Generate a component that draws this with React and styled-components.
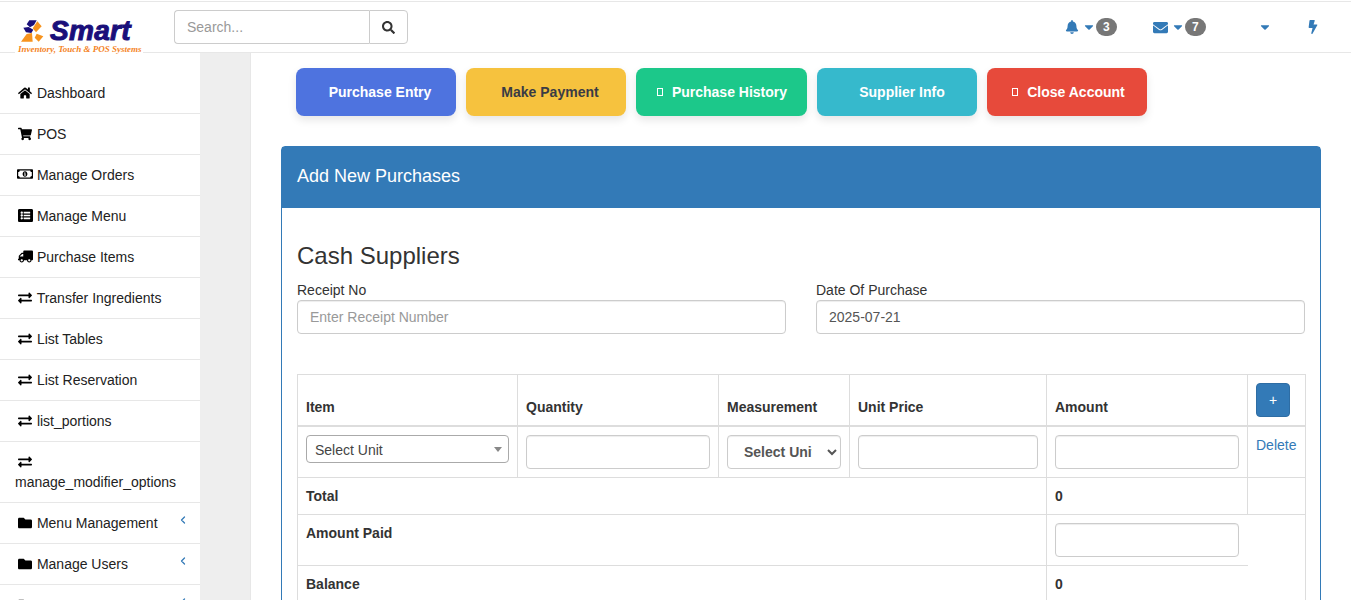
import React from 'react';
import styled, { createGlobalStyle } from 'styled-components';
import {
  FaHome, FaShoppingCart, FaRegMoneyBillAlt, FaListAlt, FaTruck, FaExchangeAlt,
  FaFolder, FaSearch, FaBell, FaEnvelope, FaCaretDown, FaBolt,
} from 'react-icons/fa';
import { ChevronLeft } from 'lucide-react';

const Global = createGlobalStyle`
  * { box-sizing: border-box; }
  html, body { margin: 0; height: 600px; overflow: hidden; background: #fff; }
  body { font-family: "Liberation Sans", Arial, sans-serif; font-size: 14px; line-height: 20px; color: #333; }
`;

const Page = styled.div`display: flex; flex-direction: column; height: 600px; overflow: hidden; padding-top: 1px;`;

const Header = styled.header`
  display: flex; align-items: flex-start; height: 52px; flex: none;
  border-top: 1px solid #e7e7e7; border-bottom: 1px solid #e7e7e7; background: #fff;
  position: relative; z-index: 2;
`;
const Logo = styled.div`
  width: 128px; height: 38px; margin: 13px 0 0 15px; background: #fff; flex: none;
  display: flex; flex-direction: column; align-items: flex-start;
`;
const LogoTop = styled.div`display: flex; align-items: center; height: 31px; padding-left: 5px;`;
const LogoName = styled.span`
  font-family: "Liberation Sans", sans-serif; font-weight: 700; font-style: italic; font-size: 28px; line-height: 31px;
  color: #1a0f7a; margin-left: 5px; letter-spacing: .3px; -webkit-text-stroke: 1px #1a0f7a;
`;
const LogoTag = styled.span`
  font-family: "Liberation Serif", serif; font-weight: 700; font-style: italic; font-size: 9px; line-height: 7px;
  color: #f5841f; padding-left: 3px; white-space: nowrap;
`;
const Search = styled.form`display: flex; width: 234px; height: 34px; margin: 8px 0 0 31px; flex: none;`;
const SearchInput = styled.input`
  flex: 1; min-width: 0; height: 34px; padding: 6px 12px; font: 14px "Liberation Sans", sans-serif; color: #555;
  border: 1px solid #ccc; border-right: 0; border-radius: 4px 0 0 4px; outline: 0;
  &::placeholder { color: #999; opacity: 1; }
`;
const SearchButton = styled.button`
  width: 39px; height: 34px; background: #fff; color: #333; border: 1px solid #ccc; border-radius: 0 4px 4px 0;
  display: flex; align-items: center; justify-content: center; padding: 0; font-size: 13px;
`;
const TopNav = styled.nav`display: flex; align-items: center; height: 50px; margin-left: auto; color: #337ab7;`;
const TopItem = styled.a`
  display: flex; align-items: center; width: ${p => p.$w}px; color: #337ab7; font-size: 14px;
`;
const Badge = styled.span`
  display: inline-block; min-width: 20px; height: 18px; padding: 3px 7px; border-radius: 10px; background: #777; color: #fff;
  font-size: 12px; font-weight: 700; line-height: 12px; text-align: center;
`;
const Caret = styled(FaCaretDown)`font-size: 14px; margin-left: 3px;`;

const Body = styled.div`display: flex; flex: 1; min-height: 0;`;
const Sidebar = styled.ul`
  width: 200px; flex: none; margin: 0; padding: 20px 0 0; list-style: none; background: #fff; overflow: hidden;
`;
const SideItem = styled.li`
  position: relative; padding: 10px 15px; border-bottom: 1px solid #e7e7e7; color: #222; font-size: 14px; line-height: 20px;
`;
const SideIcon = styled.span`
  display: inline-flex; align-items: center; justify-content: center; width: 16px; height: 14px; margin: 0 0 0 2px;
  vertical-align: -2px; font-size: ${p => p.$size || 14}px; color: #000;
  svg { transform: ${p => (p.$flip ? 'scaleX(-1)' : 'none')}; }
`;
const Chevron = styled(ChevronLeft)`
  position: absolute; right: 11px; top: 11px; color: #337ab7;
`;
const Gutter = styled.div`width: 51px; flex: none; background: #eee; border-right: 1px solid #e7e7e7;`;
const Main = styled.main`flex: 1; min-width: 0; padding: 15px 30px 0;`;

const ActionRow = styled.div`display: flex; gap: 10px; margin-left: 15px;`;
const Action = styled.button`
  height: 48px; width: ${p => p.$w}px; border: 0; border-radius: 8px; background: ${p => p.$bg}; color: ${p => p.$fg || '#fff'};
  font: 700 14px "Liberation Sans", sans-serif; box-shadow: 0 4px 8px rgba(0,0,0,.1); padding: 0 0 0 ${p => p.$pad || 0}px;
  display: flex; align-items: center; justify-content: center; gap: 9px;
`;
const Tofu = styled.span`display: inline-block; width: 6px; height: 8px; border: 1px solid currentColor;`;

const Panel = styled.section`margin-top: 30px; border: 1px solid #337ab7; border-radius: 4px; height: 500px;`;
const PanelHead = styled.div`
  height: 61px; padding: 0 15px; background: #337ab7; color: #fff; font-size: 18px; line-height: 58px;
`;
const PanelBody = styled.div`padding: 15px;`;
const Title = styled.h3`margin: 20px 0 10px; font-size: 24px; line-height: 26px; font-weight: 500; color: #333;`;
const FormRow = styled.div`display: grid; grid-template-columns: 489px 489px; column-gap: 30px;`;
const Label = styled.label`display: block; font-size: 14px; line-height: 20px; height: 21px; padding-top: 1px;`;
const Field = styled.input`
  display: block; width: 100%; height: 34px; padding: 6px 12px; font: 14px "Liberation Sans", sans-serif; color: #555;
  border: 1px solid #ccc; border-radius: 4px; box-shadow: inset 0 1px 1px rgba(0,0,0,.075); outline: 0; background: #fff;
  &::placeholder { color: #999; opacity: 1; }
`;
const PaidField = styled(Field)`width: 184px;`;

const Table = styled.table`
  width: 1008px; margin-top: 40px; table-layout: fixed; border-collapse: collapse; border: 1px solid #ddd; color: #333;
`;
const Th = styled.th`
  border: 1px solid #ddd; border-bottom: 2px solid #ddd; padding: 8px; text-align: left; vertical-align: bottom;
  font-size: 14px; line-height: 20px; font-weight: 700;
`;
const Td = styled.td`
  border: 1px solid #ddd; padding: 8px; vertical-align: top; font-size: 14px; line-height: 20px;
  font-weight: ${p => (p.$bold ? 700 : 400)};
  ${p => (p.$open ? 'border-right: 0;' : '')}
`;
const Select2 = styled.div`
  position: relative; height: 28px; border: 1px solid #aaa; border-radius: 4px; padding: 0 8px; line-height: 28px; color: #444; background: #fff;
  &::after {
    content: ''; position: absolute; right: 6px; top: 11px; border: 4px solid transparent; border-top: 5px solid #888; border-bottom: 0;
  }
`;
const NativeSelect = styled.select`
  display: block; width: 114px; height: 34px; padding: 6px 12px; background: #fff; color: #555; border: 1px solid #ccc; border-radius: 4px;
  font: 700 14px "Liberation Sans", sans-serif; text-align: center; outline: 0; box-shadow: inset 0 1px 1px rgba(0,0,0,.075);
`;
const AddButton = styled.button`
  display: block; width: 34px; height: 34px; padding: 0; background: #337ab7; color: #fff; border: 1px solid #2e6da4; border-radius: 4px;
  font: 14px "Liberation Sans", sans-serif;
`;
const DeleteLink = styled.a`color: #337ab7; font-size: 14px;`;

const LogoMark = () => (
  <svg width="25" height="24" viewBox="32 20 75 72" aria-hidden="true">
    <polygon points="52,36 60,24 82,24 74,38 62,45" fill="#1a0f7a" />
    <polygon points="42,46 58,44 72,52 66,62 50,60" fill="#1a0f7a" />
    <polygon points="84,27 97,42 80,60 70,48" fill="#f7931e" />
    <polygon points="82,64 102,72 88,88 76,76" fill="#f7931e" />
    <polygon points="52,65 68,62 70,88 35,88" fill="#f7931e" />
  </svg>
);

const sideItems = [
  [FaHome, 'Dashboard'], [FaShoppingCart, 'POS'], [FaRegMoneyBillAlt, 'Manage Orders', false, 16], [FaListAlt, 'Manage Menu', false, 15],
  [FaTruck, 'Purchase Items', true, 15], [FaExchangeAlt, 'Transfer Ingredients'], [FaExchangeAlt, 'List Tables'],
  [FaExchangeAlt, 'List Reservation'], [FaExchangeAlt, 'list_portions'], [FaExchangeAlt, 'manage_modifier_options'],
];
const folders = ['Menu Management', 'Manage Users', ''];

export default function App() {
  return (
    <Page>
      <Global />
      <Header>
        <Logo>
          <LogoTop><LogoMark /><LogoName>Smart</LogoName></LogoTop>
          <LogoTag>Inventory, Touch &amp; POS Systems</LogoTag>
        </Logo>
        <Search onSubmit={e => e.preventDefault()}>
          <SearchInput placeholder="Search..." />
          <SearchButton type="button"><FaSearch /></SearchButton>
        </Search>
        <TopNav>
          <TopItem $w={88}><FaBell /><Caret /><Badge>3</Badge></TopItem>
          <TopItem $w={102}><FaEnvelope size={15} /><Caret /><Badge>7</Badge></TopItem>
          <TopItem $w={51}><Caret /></TopItem>
          <TopItem $w={45}><FaBolt size={14} /></TopItem>
        </TopNav>
      </Header>
      <Body>
        <Sidebar>
          {sideItems.map(([Icon, label, flip, size]) => (
            <SideItem key={label}><SideIcon $flip={flip} $size={size}><Icon /></SideIcon> {label}</SideItem>
          ))}
          {folders.map(label => (
            <SideItem key={label || 'more'}><SideIcon><FaFolder /></SideIcon> {label}<Chevron size={12} strokeWidth={2.5} /></SideItem>
          ))}
        </Sidebar>
        <Gutter />
        <Main>
          <ActionRow>
            <Action $w={160} $bg="#4e73df" $pad={8}>Purchase Entry</Action>
            <Action $w={160} $bg="#f6c23e" $fg="#3a3b45" $pad={8}>Make Payment</Action>
            <Action $w={171} $bg="#1cc88a" $pad={1}><Tofu />Purchase History</Action>
            <Action $w={160} $bg="#36b9cc" $pad={10}>Supplier Info</Action>
            <Action $w={160} $bg="#e74a3b" $pad={3}><Tofu />Close Account</Action>
          </ActionRow>
          <Panel>
            <PanelHead>Add New Purchases</PanelHead>
            <PanelBody>
              <Title>Cash Suppliers</Title>
              <FormRow>
                <div><Label>Receipt No</Label><Field placeholder="Enter Receipt Number" /></div>
                <div><Label>Date Of Purchase</Label><Field defaultValue="2025-07-21" /></div>
              </FormRow>
              <Table>
                <colgroup>
                  <col style={{ width: 220 }} /><col style={{ width: 201 }} /><col style={{ width: 131 }} />
                  <col style={{ width: 197 }} /><col style={{ width: 201 }} /><col style={{ width: 58 }} />
                </colgroup>
                <thead>
                  <tr>
                    <Th>Item</Th><Th>Quantity</Th><Th>Measurement</Th><Th>Unit Price</Th><Th>Amount</Th>
                    <Th><AddButton type="button">+</AddButton></Th>
                  </tr>
                </thead>
                <tbody>
                  <tr>
                    <Td><Select2>Select Unit</Select2></Td>
                    <Td><Field /></Td>
                    <Td><NativeSelect defaultValue="u"><option value="u">Select Unit</option></NativeSelect></Td>
                    <Td><Field /></Td>
                    <Td><Field /></Td>
                    <Td><DeleteLink>Delete</DeleteLink></Td>
                  </tr>
                  <tr><Td colSpan={4} $bold>Total</Td><Td $bold>0</Td><Td /></tr>
                  <tr><Td colSpan={4} $bold>Amount Paid</Td><Td $open><PaidField /></Td></tr>
                  <tr><Td colSpan={4} $bold>Balance</Td><Td $bold $open>0</Td></tr>
                </tbody>
              </Table>
            </PanelBody>
          </Panel>
        </Main>
      </Body>
    </Page>
  );
}
